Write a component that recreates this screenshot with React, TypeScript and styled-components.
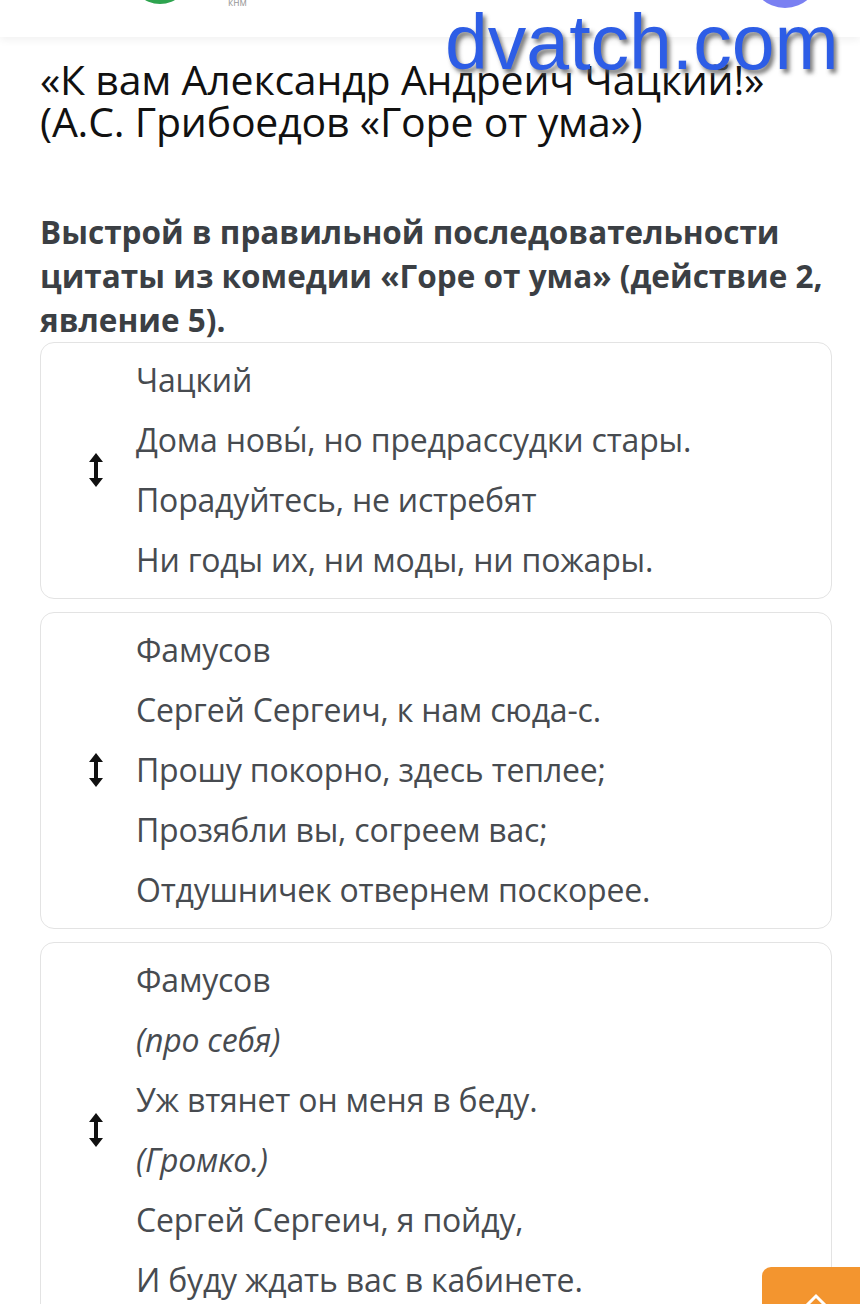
import React from "react"
import styled, { createGlobalStyle } from "styled-components"

type Line = { text: string; italic?: boolean }
type Card = { lines: Line[] }

const cards: Card[] = [
  {
    lines: [
      { text: "Чацкий" },
      { text: "Дома новы́, но предрассудки стары." },
      { text: "Порадуйтесь, не истребят" },
      { text: "Ни годы их, ни моды, ни пожары." },
    ],
  },
  {
    lines: [
      { text: "Фамусов" },
      { text: "Сергей Сергеич, к нам сюда-с." },
      { text: "Прошу покорно, здесь теплее;" },
      { text: "Прозябли вы, согреем вас;" },
      { text: "Отдушничек отвернем поскорее." },
    ],
  },
  {
    lines: [
      { text: "Фамусов" },
      { text: "(про себя)", italic: true },
      { text: "Уж втянет он меня в беду." },
      { text: "(Громко.)", italic: true },
      { text: "Сергей Сергеич, я пойду," },
      { text: "И буду ждать вас в кабинете." },
    ],
  },
]

const DragIcon = () => (
  <svg width="16" height="34" viewBox="0 0 16 34">
    <path
      d="M8 0 L15 9 L10 9 L10 25 L15 25 L8 34 L1 25 L6 25 L6 9 L1 9 Z"
      fill="#111"
    />
  </svg>
)

const App = () => {
  return (
    <Page>
      <GlobalStyle />
      <Header>
        <Logo />
        <LogoCaption>кнм</LogoCaption>
        <Spacer />
        <Avatar />
      </Header>
      <Watermark>dvatch.com</Watermark>
      <Content>
        <Title>
          «К вам Александр Андреич Чацкий!»
          <br />
          (А.С. Грибоедов «Горе от ума»)
        </Title>
        <Question>
          Выстрой в правильной последовательности цитаты из комедии «Горе от
          ума» (действие 2, явление 5).
        </Question>
        <List>
          {cards.map((card, i) => (
            <Item key={i}>
              <Handle>
                <DragIcon />
              </Handle>
              <Lines>
                {card.lines.map((line, j) => (
                  <Text key={j} italic={line.italic}>
                    {line.text}
                  </Text>
                ))}
              </Lines>
            </Item>
          ))}
        </List>
      </Content>
      <UpButton>
        <svg width="24" height="14" viewBox="0 0 24 14">
          <path d="M3 12 L12 3 L21 12" stroke="#fff" strokeWidth="3" fill="none" />
        </svg>
      </UpButton>
    </Page>
  )
}

const GlobalStyle = createGlobalStyle`
  body {
    margin: 0;
    background: #fff;
    font-family: "Open Sans", "Noto Sans", sans-serif;
    overflow: hidden;
  }
`
const Page = styled.div`
  position: relative;
  width: 860px;
  height: 1304px;
  overflow: hidden;
  background: #fff;
`
const Header = styled.div`
  display: flex;
  align-items: flex-end;
  height: 37px;
  padding: 0 40px 0 130px;
  overflow: hidden;
  background: #fff;
  box-shadow: 0 3px 8px rgba(0, 0, 0, 0.06);
`
const Logo = styled.div`
  flex: none;
  width: 60px;
  height: 60px;
  margin-bottom: 33px;
  border-radius: 50%;
  background: #2ea44f;
`
const LogoCaption = styled.span`
  margin: 0 0 30px 38px;
  font-size: 10px;
  line-height: 10px;
  color: #999;
`
const Spacer = styled.div`
  flex: 1;
`
const Avatar = styled.div`
  flex: none;
  width: 70px;
  height: 70px;
  margin-bottom: 29px;
  border-radius: 50%;
  background: #7a80f2;
`
const Watermark = styled.div`
  position: absolute;
  left: 445px;
  top: -3px;
  font-family: "Liberation Sans", Arial, sans-serif;
  font-size: 77px;
  line-height: 90px;
  color: #2d5de6;
  text-shadow: 3px 4px 4px rgba(90, 90, 90, 0.8);
  z-index: 2;
`
const Content = styled.div`
  padding: 21px 20px 0 40px;
`
const Title = styled.h1`
  margin: 0;
  font-weight: 400;
  font-size: 41px;
  line-height: 42px;
  color: #111;
  letter-spacing: -0.2px;
`
const Question = styled.p`
  margin: 68px 0 0;
  font-weight: 700;
  font-size: 31.5px;
  line-height: 44px;
  color: #3b3f44;
`
const List = styled.div`
  display: flex;
  flex-direction: column;
  gap: 13px;
  margin-right: 8px;
`
const Item = styled.div`
  display: flex;
  align-items: center;
  border: 1px solid #e3e3e3;
  border-radius: 14px;
  padding: 7px 0 8px;
  background: #fff;
`
const Handle = styled.div`
  width: 95px;
  display: flex;
  justify-content: center;
  padding-left: 14px;
  box-sizing: border-box;
`
const Lines = styled.div`
  display: flex;
  flex-direction: column;
`
const Text = styled.div<{ italic?: boolean }>`
  font-size: 32px;
  line-height: 60px;
  color: #474b50;
  font-style: ${(p) => (p.italic ? "italic" : "normal")};
  letter-spacing: -0.2px;
`
const UpButton = styled.div`
  position: absolute;
  left: 762px;
  top: 1267px;
  width: 120px;
  height: 80px;
  border-radius: 9px;
  background: #f3952f;
  display: flex;
  padding: 26px 0 0 42px;
  box-sizing: border-box;
`

export default App
